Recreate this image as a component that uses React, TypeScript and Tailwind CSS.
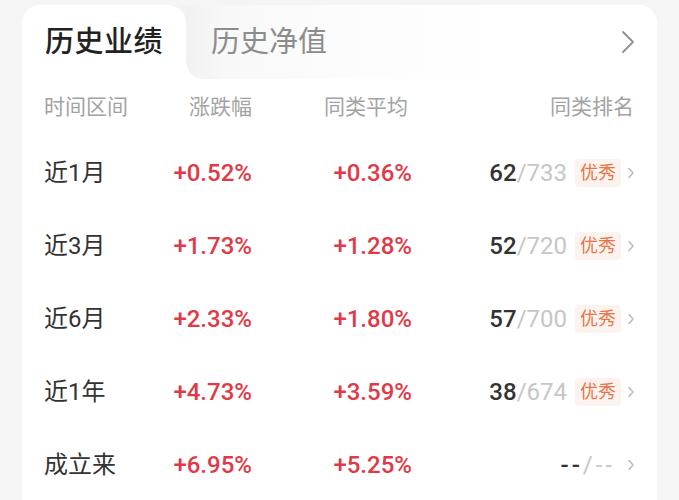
import React from 'react'

const font = { fontFamily: 'Roboto, "Noto Sans CJK SC", sans-serif' }

type Row = {
  label: string
  change: string
  avg: string
  rank: string
  total: string
  tag?: string
}

const rows: Row[] = [
  { label: '近1月', change: '+0.52%', avg: '+0.36%', rank: '62', total: '733', tag: '优秀' },
  { label: '近3月', change: '+1.73%', avg: '+1.28%', rank: '52', total: '720', tag: '优秀' },
  { label: '近6月', change: '+2.33%', avg: '+1.80%', rank: '57', total: '700', tag: '优秀' },
  { label: '近1年', change: '+4.73%', avg: '+3.59%', rank: '38', total: '674', tag: '优秀' },
  { label: '成立来', change: '+6.95%', avg: '+5.25%', rank: '--', total: '--' },
]

const SmallChevron = () => (
  <svg width="8" height="12" viewBox="0 0 8 12" className="ml-[6px]">
    <path d="M2 1.5 L6 6 L2 10.5" fill="none" stroke="#bdbdbd" strokeWidth="1.6" strokeLinecap="round" strokeLinejoin="round" />
  </svg>
)

export default function App() {
  return (
    <div className="w-[679px] h-[500px] bg-[#f5f5f5] pt-[5px] pl-[22px] pr-[22px] overflow-hidden" style={font}>
      <div className="bg-white rounded-t-[18px] h-[520px]">
        {/* Tabs */}
        <div className="flex h-[74px] bg-[#f3f3f3] rounded-t-[18px]">
          <div className="w-[164px] bg-white rounded-t-[18px] flex items-center pl-[23px]">
            <span className="text-[29px] font-medium text-[#222] leading-none tracking-[0.5px]">历史业绩</span>
          </div>
          <div className="flex-1 bg-white rounded-tr-[18px]">
            <div className="h-full rounded-bl-[18px] rounded-tr-[18px] bg-[linear-gradient(90deg,#f1f1f1,#f8f8f8_8%,#fcfcfc_30%,#ffffff_70%)] flex items-center justify-between pl-[25px] pr-[22px]">
              <span className="text-[29px] text-[#8c8c8c] leading-none">历史净值</span>
              <svg width="14" height="24" viewBox="0 0 14 24">
                <path d="M2 2 L12 12 L2 22" fill="none" stroke="#8f8f8f" strokeWidth="1.8" strokeLinecap="round" strokeLinejoin="round" />
              </svg>
            </div>
          </div>
        </div>

        {/* Table */}
        <div className="pl-[22px] pr-[22px]">
          <div className="grid grid-cols-[129px_79px_160px_1fr] h-[57px] items-center text-[21px] text-[#a3a3a3] leading-none">
            <span>时间区间</span>
            <span className="text-right">涨跌幅</span>
            <span className="text-right pr-[4px]">同类平均</span>
            <span className="text-right pr-[1px]">同类排名</span>
          </div>
          {rows.map(r => (
            <div key={r.label} className="grid grid-cols-[129px_79px_160px_1fr] h-[73px] items-center leading-none">
              <span className="text-[24px] text-[#333]">{r.label}</span>
              <span className="text-[24px] font-medium text-[#e03a48] text-right">{r.change}</span>
              <span className="text-[24px] font-medium text-[#e03a48] text-right">{r.avg}</span>
              <div className="flex items-center justify-end">
                {r.tag ? (
                  <>
                    <span className="text-[24px] font-medium text-[#333]">{r.rank}</span>
                    <span className="text-[24px] text-[#c6c6c6]">/{r.total}</span>
                    <span className="ml-[8px] h-[28px] px-[5px] flex items-center rounded-[4px] bg-[#fdf3ee] text-[18px] text-[#e8754a]">
                      {r.tag}
                    </span>
                  </>
                ) : (
                  <span className="text-[24px] tracking-[3px] mr-[6px]">
                    <span className="text-[#333] font-medium">{r.rank}</span>
                    <span className="text-[#c6c6c6]">/{r.total}</span>
                  </span>
                )}
                <SmallChevron />
              </div>
            </div>
          ))}
        </div>
      </div>
    </div>
  )
}
